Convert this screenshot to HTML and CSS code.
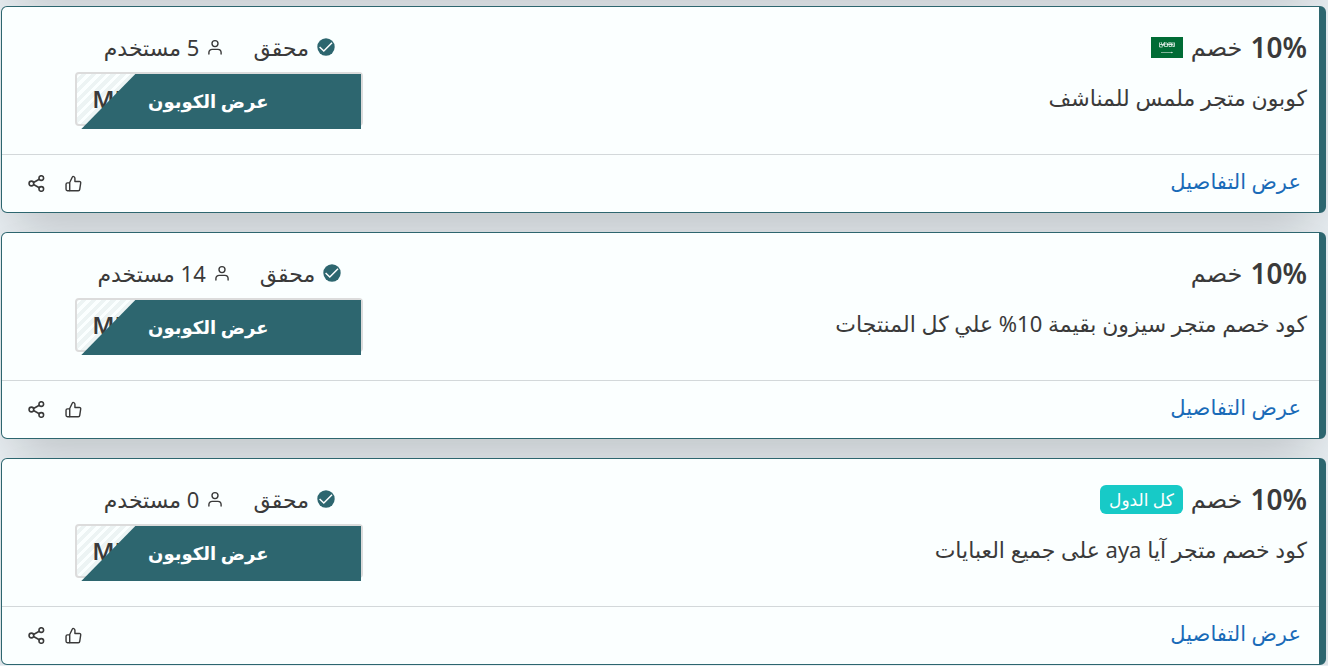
FILE: index.html
```
<!DOCTYPE html>
<html lang="ar" dir="rtl">
<head>
  <meta charset="UTF-8">
  <meta name="viewport" content="width=device-width, initial-scale=1.0">
  <title>كوبونات الخصم</title>
  <link rel="stylesheet" href="styles.css">
</head>
<body>

  <!-- Shared icons -->
  <svg class="sprite" aria-hidden="true">
    <symbol id="icon-check" viewBox="0 0 18 18">
      <circle cx="9" cy="9" r="8.7" fill="#2d666f"/>
      <path d="M2.6 9l4.2 4L15 4.8" fill="none" stroke="#fff" stroke-width="1.5"/>
    </symbol>
    <symbol id="icon-user" viewBox="0 0 16 16">
      <g fill="none" stroke="currentColor" stroke-width="1.4" stroke-linecap="round">
        <circle cx="8" cy="4.6" r="3"/>
        <path d="M1.9 15v-1.4a3.2 3.2 0 0 1 3.2-3.2h5.8a3.2 3.2 0 0 1 3.2 3.2V15"/>
      </g>
    </symbol>
    <symbol id="icon-like" viewBox="0 0 18 18">
      <g fill="none" stroke="currentColor" stroke-width="1.5" stroke-linejoin="round">
        <path d="M5 7.9L7.9 1.9c.3-.7 2.6-.5 2.6 1.6v3.3h4.6c1.2 0 1.7.8 1.5 1.8l-1 6.6c-.1.9-.7 1.4-1.5 1.4H5z"/>
        <path d="M5 8.3H2.6c-.8 0-1.5.6-1.5 1.5v5.3c0 .9.7 1.5 1.5 1.5H5"/>
      </g>
    </symbol>
    <symbol id="icon-share" viewBox="0 0 16 16">
      <g fill="none" stroke="currentColor" stroke-width="1.5">
        <circle cx="12.5" cy="2.9" r="2.2"/>
        <circle cx="3.2" cy="8" r="2.2"/>
        <circle cx="12.5" cy="13.1" r="2.2"/>
        <path d="M5.2 7l5.4-3M5.2 9l5.4 3"/>
      </g>
    </symbol>
  </svg>

  <main class="coupons">

    <article class="coupon">
      <div class="coupon-body">
        <div class="coupon-info">
          <h2 class="discount">
            <bdi class="amount" dir="ltr">10%</bdi>
            <span>خصم</span>
            <svg class="flag" viewBox="0 0 32 21" role="img" aria-label="السعودية">
              <rect width="32" height="21" fill="#006c35"/>
              <g fill="none" stroke="#fff" stroke-width=".7">
                <path d="M8.5 5.5v4.5h3M10 5l1.5 4M12 6.5c2-1 1 3-1 2.5M13.5 5v4.5h3V6M15 5v3M18 5v4.5h2.5V5.5M19.2 5v3M22 5v4.5M23.5 5.5v4h-2M9 7.5h4M16 7.5h6"/>
                <path d="M10 15.5h12M20.5 14.8v1.4" stroke-width=".5"/>
              </g>
            </svg>
          </h2>
          <p class="title">كوبون متجر ملمس للمناشف</p>
        </div>
        <div class="coupon-action">
          <div class="stats">
            <span class="stat"><svg class="icon-check"><use href="#icon-check"/></svg>محقق</span>
            <span class="stat"><svg class="icon-user"><use href="#icon-user"/></svg>5 مستخدم</span>
          </div>
          <button type="button" class="reveal">
            <span class="code" dir="ltr">ML</span>
            <span class="cover">عرض الكوبون</span>
          </button>
        </div>
      </div>
      <div class="coupon-footer">
        <a href="#" class="details">عرض التفاصيل</a>
        <div class="tools">
          <button type="button" class="tool" aria-label="إعجاب"><svg class="icon-like"><use href="#icon-like"/></svg></button>
          <button type="button" class="tool" aria-label="مشاركة"><svg class="icon-share"><use href="#icon-share"/></svg></button>
        </div>
      </div>
    </article>

    <article class="coupon">
      <div class="coupon-body">
        <div class="coupon-info">
          <h2 class="discount">
            <bdi class="amount" dir="ltr">10%</bdi>
            <span>خصم</span>
          </h2>
          <p class="title">كود خصم متجر سيزون بقيمة 10% علي كل المنتجات</p>
        </div>
        <div class="coupon-action">
          <div class="stats">
            <span class="stat"><svg class="icon-check"><use href="#icon-check"/></svg>محقق</span>
            <span class="stat"><svg class="icon-user"><use href="#icon-user"/></svg>14 مستخدم</span>
          </div>
          <button type="button" class="reveal">
            <span class="code" dir="ltr">ML</span>
            <span class="cover">عرض الكوبون</span>
          </button>
        </div>
      </div>
      <div class="coupon-footer">
        <a href="#" class="details">عرض التفاصيل</a>
        <div class="tools">
          <button type="button" class="tool" aria-label="إعجاب"><svg class="icon-like"><use href="#icon-like"/></svg></button>
          <button type="button" class="tool" aria-label="مشاركة"><svg class="icon-share"><use href="#icon-share"/></svg></button>
        </div>
      </div>
    </article>

    <article class="coupon">
      <div class="coupon-body">
        <div class="coupon-info">
          <h2 class="discount">
            <bdi class="amount" dir="ltr">10%</bdi>
            <span>خصم</span>
            <span class="badge">كل الدول</span>
          </h2>
          <p class="title">كود خصم متجر آيا aya على جميع العبايات</p>
        </div>
        <div class="coupon-action">
          <div class="stats">
            <span class="stat"><svg class="icon-check"><use href="#icon-check"/></svg>محقق</span>
            <span class="stat"><svg class="icon-user"><use href="#icon-user"/></svg>0 مستخدم</span>
          </div>
          <button type="button" class="reveal">
            <span class="code" dir="ltr">ML</span>
            <span class="cover">عرض الكوبون</span>
          </button>
        </div>
      </div>
      <div class="coupon-footer">
        <a href="#" class="details">عرض التفاصيل</a>
        <div class="tools">
          <button type="button" class="tool" aria-label="إعجاب"><svg class="icon-like"><use href="#icon-like"/></svg></button>
          <button type="button" class="tool" aria-label="مشاركة"><svg class="icon-share"><use href="#icon-share"/></svg></button>
        </div>
      </div>
    </article>

  </main>

</body>
</html>
```
FILE: styles.css
```
* {
  box-sizing: border-box;
}

body {
  font-family: "Noto Sans", "DejaVu Sans", sans-serif;
  font-size: 22px;
  line-height: 30px;
  color: #3a3a3a;
  background-color: #e9eff3;
  margin: 0;
}

button {
  font: inherit;
  color: inherit;
  background: none;
  border: none;
  padding: 0;
  cursor: pointer;
}

.sprite {
  display: none;
}

.coupons {
  display: flex;
  flex-direction: column;
  gap: 19px;
  padding: 0 2px 0 1px;
  overflow: hidden;
}

/* shadow that falls on the top of the list */
.coupons::before {
  content: "";
  height: 200px;
  margin-top: -213px;
  box-shadow: 0 25px 50px -12px rgba(0, 0, 0, 0.2);
}

.coupon {
  background-color: #fbffff;
  border: 1px solid #2d666f;
  border-right-width: 7px;
  border-radius: 6px;
  box-shadow: 0 25px 50px -12px rgba(0, 0, 0, 0.2);
}

.coupon-body {
  display: flex;
  height: 147px;
}

.coupon-info {
  width: 67%;
  padding: 22px 12px 0;
}

.discount {
  display: flex;
  align-items: center;
  gap: 8px;
  height: 36px;
  margin: 0;
  font-size: 24px;
  font-weight: normal;
}

.amount {
  font-size: 28px;
  font-weight: 600;
}

.flag {
  width: 32px;
  height: 21px;
}

.badge {
  padding: 0 9px;
  border-radius: 6px;
  font-size: 17px;
  line-height: 29px;
  color: #fff;
  background-color: #17cac7;
}

.title {
  margin: 17px 0 0;
}

.coupon-action {
  width: 33%;
  display: flex;
  flex-direction: column;
  align-items: center;
  padding-top: 25px;
}

.stats {
  display: flex;
  gap: 30px;
  margin-bottom: 10px;
}

.stat {
  display: flex;
  align-items: center;
  gap: 8px;
}

.icon-check {
  width: 18px;
  height: 18px;
}

.icon-user {
  width: 16px;
  height: 16px;
}

.reveal {
  position: relative;
  display: flex;
  justify-content: flex-end;
  width: 288px;
  height: 54px;
  border: 2px solid #dcdcdc;
  border-radius: 4px;
  background: repeating-linear-gradient(135deg, #fbffff 0 3px, #edf4f4 3px 7px);
}

.code {
  padding-left: 15px;
  font-size: 24px;
  font-weight: 600;
  line-height: 50px;
}

.cover {
  position: absolute;
  top: 0;
  right: 0;
  width: 280px;
  height: 55px;
  padding-right: 26px;
  font-size: 18px;
  line-height: 55px;
  font-weight: bold;
  color: #fff;
  background-color: #2d666f;
  clip-path: polygon(54px 0, 100% 0, 100% 100%, 0 100%);
}

.coupon-footer {
  display: flex;
  justify-content: space-between;
  align-items: center;
  height: 58px;
  padding: 0 18px 0 26px;
  border-top: 1px solid #d3d8da;
}

.details {
  padding-bottom: 5px;
  font-size: 21px;
  color: #1a6bb8;
  text-decoration: none;
}

.tools {
  display: flex;
  align-items: center;
  gap: 20px;
}

.tool {
  display: flex;
}

.icon-like {
  width: 17px;
  height: 17px;
}

.icon-share {
  width: 17px;
  height: 17px;
}
```
